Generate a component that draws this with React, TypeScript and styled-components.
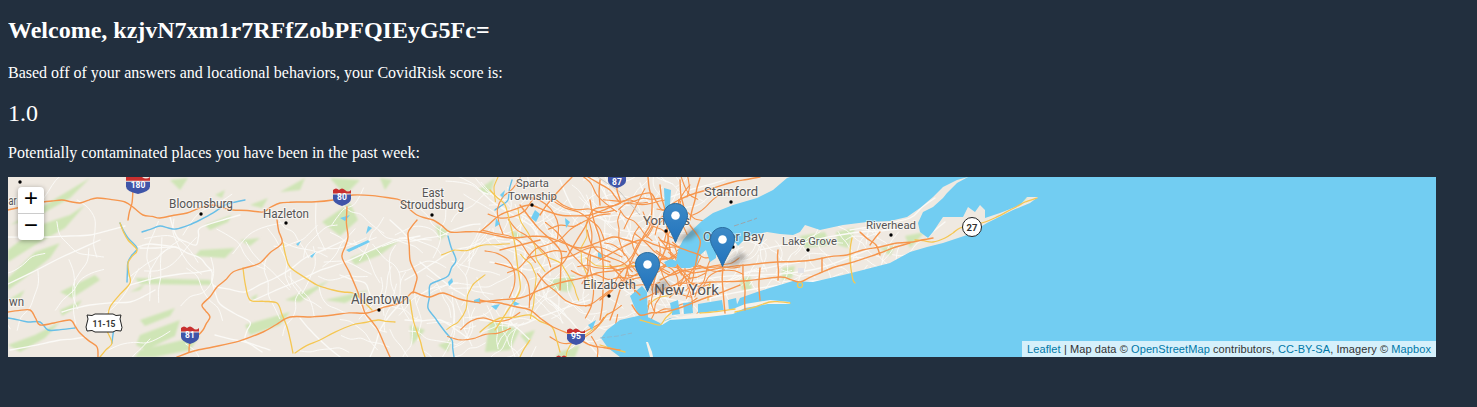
import React from "react";
import styled, { createGlobalStyle } from "styled-components";

const Global = createGlobalStyle`
  html, body { margin: 0; padding: 0; background: #222f3e; }
  body { margin: 8px; font-family: "Liberation Serif", "Times New Roman", serif; color: #fff; }
`;
const Page = styled.main`display: flow-root; margin-top: 4px;`;
const Title = styled.h2`font-size: 24px; font-weight: 700; margin: 5px 0 20px; line-height: 27px;`;
const Copy = styled.p`font-size: 16px; line-height: 18px; margin: 16px 0 15px;`;
const Score = styled.div`font-size: 24px; line-height: 27px; margin: 18px 0 17px;`;
const MapBox = styled.div`position: relative; width: 1428px; height: 180px; overflow: hidden; background: #efe9e1; font-family: "Liberation Sans", Arial, sans-serif;`;
const Tiles = styled.svg`display: block; width: 1428px; height: 180px;`;
const Zoom = styled.div`position: absolute; left: 10px; top: 10px; width: 26px; border-radius: 4px; background: #fff; box-shadow: 0 1px 5px rgba(0,0,0,.35); overflow: hidden;`;
const ZoomBtn = styled.a<{ $last?: boolean }>`display: block; width: 26px; height: 26px; text-align: center; color: #000; font: 400 24px/26px "Liberation Mono", monospace; border-bottom: ${p => (p.$last ? "none" : "1px solid #ccc")};`;
const Attribution = styled.div`position: absolute; right: 0; bottom: 0; padding: 0 5px; background: rgba(255,255,255,.7); color: #333; font-size: 11px; letter-spacing: .09px; line-height: 16px; white-space: nowrap;`;
const Link = styled.a`color: #0078a8; text-decoration: none;`;
const Marker = styled.svg<{ $x: number; $y: number }>`position: absolute; left: ${p => p.$x}px; top: ${p => p.$y}px; width: 25px; height: 40px; overflow: visible;`;

const C = { orange: "#f6964e", yellow: "#f5c753", white: "#fbfaf7", water: "#72cdf2", green: "#cfe5b6" };

const seaPath = `M790 177 L787 178 L773 190 L757 198 L733 205 L713 213 L703 220 L690 232 L683 240 L678 250 L676 262 L681 268 L690 268 L697 265 L699 256 L706 250 L710 262 L716 258 L716 244 L722 240 L732 238 L738 246 L746 238 L757 234 L767 232 L780 234 L793 235 L800 232 L805 225 L820 230 L843 225 L867 222 L890 221 L907 217 L920 208 L933 197 L943 187 L957 180 L968 177 L957 183 L947 193 L943 198 L933 207 L923 212 L918 223 L920 232 L928 238 L933 232 L943 217 L963 217 L968 207 L975 212 L980 205 L985 210 L985 218 L1000 213 L1020 205 L1027 197 L1038 197 L1030 203 L1013 210 L987 223 L967 235 L943 243 L927 247 L910 252 L890 263 L863 270 L843 275 L813 282 L793 281 L773 287 L757 292 L740 298 L733 313 L700 315 L670 318 L660 323 L650 318 L642 315 L620 320 L607 330 L601 338 L608 348 L620 357 L1436 357 L1436 177 Z`;
const barrier = `M660 323 L672 318 L700 313 L733 309 L745 304 L770 300 L790 302 L790 304 L768 304 L745 308 L733 314 L700 318 L670 320 L662 325 Z`;

const ponds: string[] = [
  "M630 296 L642 286 L647 292 L648 318 L640 318 L634 306 Z", "M664 188 L671 190 L670 205 L669 218 L665 214 Z", "M664 262 L671 259 L679 262 L675 267 L667 267 Z",
  "M670 303 L678 300 L680 314 L672 315 Z", "M683 303 L692 302 L693 313 L684 314 Z", "M698 304 L722 300 L724 312 L698 313 Z", "M728 300 L736 298 L738 310 L729 311 Z",
  "M535 210 L540 214 L536 222 L531 218 Z", "M565 218 L570 222 L566 228 Z", "M496 218 L500 224 L495 227 Z", "M598 252 L604 256 L598 260 Z", "M491 306 L500 304 L496 310 Z",
  "M368 226 L372 228 L366 234 Z", "M340 218 L350 215 L345 221 Z", "M368 240 L346 250 L349 252 L370 242 Z", "M448 282 L452 278 L453 282 L449 286 Z",
  "M474 300 L480 298 L480 303 L474 303 Z", "M296 244 L301 241 L298 246 Z", "M310 256 L316 252 L312 258 Z", "M500 195 L505 190 L503 198 Z", "M588 325 L596 320 L592 330 Z", "M512 300 L520 304 L514 306 Z"
];

const greens: string[] = [
  "M8 278 L35 252 L60 243 L50 258 L22 280 L8 290 Z", "M8 250 L40 225 L70 215 L85 205 L65 228 L35 245 L8 262 Z", "M10 225 L45 205 L90 178 L70 198 L35 218 Z",
  "M60 292 L95 275 L100 280 L72 298 Z", "M130 292 L145 284 L140 290 Z", "M8 345 L35 335 L60 322 L45 338 L20 352 Z", "M140 320 L175 308 L170 316 L145 326 Z",
  "M140 335 L180 320 L175 336 L146 350 L136 345 Z", "M140 350 L200 336 L190 350 L155 357 L135 357 Z", "M200 250 L235 248 L225 258 L195 256 Z", "M135 278 L210 280 L212 285 L140 284 Z",
  "M205 225 L232 215 L228 222 L210 230 Z", "M250 298 L258 294 L255 300 Z", "M245 325 L290 312 L280 325 L250 335 Z", "M285 300 L330 280 L300 302 Z", "M325 300 L370 290 L345 303 Z",
  "M240 240 L260 238 L250 246 Z", "M322 222 L350 203 L358 220 L340 236 Z", "M350 258 L400 240 L380 255 L355 265 Z", "M170 180 L188 178 L180 190 Z", "M280 192 L305 178 L300 190 Z",
  "M330 178 L360 180 L345 195 Z", "M380 178 L392 180 L385 190 Z", "M435 225 L450 232 L440 240 Z", "M410 325 L425 330 L412 345 Z", "M438 345 L452 340 L448 352 Z", "M490 320 L520 330 L510 350 L485 352 Z",
  "M550 280 L575 275 L570 292 L552 290 Z", "M510 230 L525 235 L515 240 Z", "M520 335 L535 330 L528 345 Z", "M560 352 L580 345 L575 357 L555 357 Z", "M478 190 L495 178 L490 195 Z", "M800 236 L825 232 L830 245 L805 248 Z",
  "M836 232 L855 228 L848 248 L838 245 Z", "M905 236 L925 232 L910 248 Z", "M880 248 L895 246 L890 256 Z", "M740 280 L750 276 L752 290 L742 290 Z", "M782 268 L795 266 L792 278 L782 280 Z", "M988 208 L992 205 L996 208 L990 214 Z", "M1020 198 L1028 197 L1022 203 Z", "M60 310 L82 300 L78 306 L62 316 Z", "M8 300 L25 290 L20 298 Z", "M250 205 L268 198 L262 208 Z", "M215 195 L225 190 L222 198 Z"
];

const whites: string[] = [
  "8,237 50,237 90,235 125,226", "140,248 175,247 200,258 212,272 213,285 245,292 275,278 305,258 345,240", "8,284 60,258 100,240", "170,217 178,238 196,245 200,228 240,215", "135,248 150,244 176,247",
  "130,285 180,274 212,270", "62,312 90,305 130,302 155,290", "213,285 220,304 250,322 245,340 262,352", "250,302 300,280 345,262 395,240 420,236", "340,275 365,283 372,300", "405,280 435,262 455,250 480,243",
  "390,220 412,240 440,236 470,225 480,224", "420,262 452,288 465,296", "400,304 380,330 370,357", "300,318 320,340 340,357", "215,335 245,342 270,350", "10,350 60,340 85,337", "405,320 440,320 470,340",
  "480,190 505,210 530,225 548,250 550,275", "490,262 530,270 560,262 590,250", "500,230 525,250 520,285 510,320 530,340", "480,320 520,325 560,310 590,300", "550,300 570,320 590,345 600,357", "560,180 575,210 610,222 640,212", "600,185 625,222 640,255 650,280",
  "590,270 610,280 640,300 660,312", "660,275 700,292 750,272 800,262", "690,282 760,275 820,268 880,245", "760,250 800,243 860,232 905,228", "925,240 945,222", "700,300 760,288 830,280", "640,183 650,203 690,190 725,180", "850,230 910,218 935,198"
];

const blues: string[] = [
  "120,223 128,238 137,248 128,262 127,282", "142,232 160,226 176,229 200,220 225,205 245,200", "75,328 48,330 40,322 28,322 8,318", "112,343 114,330 120,320", "448,236 456,260 448,276 430,285 428,308 440,325 452,340 454,357", "512,180 508,200 495,210"
];

const orange: string[] = [
  "8,210 43,202 62,200 80,203 97,198 125,202 143,215 160,218 187,213 213,205 233,210 263,212 280,203 300,202 333,200 353,195 390,198 400,200 417,215 433,220 450,232 480,232 513,238 547,237 580,248 613,237 637,243",
  "133,190 132,203 128,220", "347,207 348,237 342,257 357,290 365,313 378,330 390,357", "480,303 443,293 430,297 413,292 400,303 367,313 333,315 290,317 263,332 213,347 177,357",
  "277,220 282,243 260,263 233,272 217,287 202,305 210,317 203,330 190,343 189,352", "8,312 30,310 40,325 70,320 80,333 97,347 98,357", "417,220 408,233 410,260 417,277 413,293",
  "480,302 520,298 547,287 573,280 597,273 630,267 660,262", "530,300 543,277 563,263 577,240 593,210 620,203 617,190 618,177", "480,300 500,303 530,310 553,327 590,345 620,350", "480,232 500,215 530,205 560,215 590,215 620,203",
  "620,203 650,193 663,210 690,195 733,182 760,177", "588,177 610,190 620,203", "648,177 652,200 650,225 640,243 628,268 620,290 610,320", "660,185 665,210 668,240 660,262 652,290", "680,180 684,210 676,240", "700,178 695,200 690,220",
  "693,273 720,268 747,265 777,262 813,260 847,255 880,247 913,242 933,238", "680,283 713,282 780,277 800,282 820,273 850,263 880,253 910,243", "723,268 723,290 725,313", "743,265 745,290 745,310", "778,250 778,265 778,280", "822,258 822,272", "860,232 876,245 880,255", "870,245 880,232",
  "660,280 680,270 693,273", "640,300 660,290 680,283", "632,305 640,315 665,312 700,300 740,285", "600,260 640,240 670,250", "590,200 600,240 603,290 600,320", "520,205 560,250 560,290", "500,250 540,240", "560,240 610,262", "572,177 555,195 540,215", "600,300 645,270", "610,265 640,295", "640,255 670,275 700,268", "660,240 700,255", "600,180 600,205", "680,205 700,240 695,268", "760,268 760,300"
];

const yellow: string[] = [
  "120,223 128,240 137,250 128,263 130,283 110,307 107,330 112,343 100,357", "283,243 290,267 317,285 333,290 353,293 367,305 372,310", "243,268 250,300 277,303 287,327 293,353", "410,300 420,340 425,357", "295,353 320,340 352,325 378,320 395,322",
  "480,332 500,318 530,315 552,327 560,352", "490,190 505,205 515,245 520,290 495,330", "530,340 520,357", "640,320 660,325 672,312", "700,313 735,309", "735,312 770,302 790,303", "710,282 708,300", "852,238 850,258 853,280 855,283", "915,240 933,242 945,238 960,228 985,222 1010,210 1025,202 1037,198", "600,345 625,352"
];

function rnd(seed: number) { let s = seed; return () => { s = (s * 16807) % 2147483647; return s / 2147483647; }; }
function mesh(seed: number, n: number, x0: number, x1: number, y0: number, y1: number, step: number, parts = 5): string[] {
  const r = rnd(seed); const out: string[] = [];
  for (let i = 0; i < n; i++) {
    let x = x0 + r() * (x1 - x0), y = y0 + r() * (y1 - y0), a = r() * Math.PI * 2; const pts = [`${x.toFixed(1)},${y.toFixed(1)}`];
    for (let k = 0; k < parts; k++) { a += (r() - .5) * 1.1; x += Math.cos(a) * step; y += Math.sin(a) * step; pts.push(`${x.toFixed(1)},${y.toFixed(1)}`); }
    out.push(pts.join(" "));
  }
  return out;
}
// Catmull-Rom through the points, with a small wobble so that roads do not run ruler-straight.
function curve(line: string, seed: number): string {
  const r = rnd(seed + 11);
  const raw = line.split(" ").map(p => p.split(",").map(Number));
  const pts: number[][] = [];
  raw.forEach((p, i) => {
    pts.push(p);
    const q = raw[i + 1];
    if (q) {
      const d = Math.hypot(q[0] - p[0], q[1] - p[1]);
      if (d > 14) pts.push([(p[0] + q[0]) / 2 + (r() - .5) * d * .07, (p[1] + q[1]) / 2 + (r() - .5) * d * .07]);
    }
  });
  let d = `M${pts[0][0]} ${pts[0][1]}`;
  for (let i = 0; i < pts.length - 1; i++) {
    const a = pts[Math.max(i - 1, 0)], b = pts[i], c = pts[i + 1], e = pts[Math.min(i + 2, pts.length - 1)];
    d += `C${(b[0] + (c[0] - a[0]) / 6).toFixed(1)} ${(b[1] + (c[1] - a[1]) / 6).toFixed(1)} ${(c[0] - (e[0] - b[0]) / 6).toFixed(1)} ${(c[1] - (e[1] - b[1]) / 6).toFixed(1)} ${c[0].toFixed(1)} ${c[1].toFixed(1)}`;
  }
  return d;
}
const cityOrange = mesh(77, 60, 620, 700, 195, 312, 9);
const regionOrange = mesh(41, 26, 485, 625, 190, 345, 13);
const regionYellow = mesh(19, 10, 485, 620, 200, 350, 14);
const cityWhite = mesh(31, 130, 485, 700, 180, 350, 9);
const westWhite = mesh(53, 60, 300, 485, 215, 355, 10);
const farWhite = mesh(67, 28, 10, 300, 215, 355, 13);
const liWhite = mesh(97, 60, 700, 900, 238, 292, 7);

const labels = [
  ["Bloomsburg", 169, 208, 64, 12], ["Hazleton", 263, 218, 46, 12], ["East", 422, 197, 22, 12], ["Stroudsburg", 400, 209, 64, 12], ["Allentown", 351, 304, 58, 14], ["wn", 9, 306, 15, 12], ["ar", 8.5, 205, 8, 12],
  ["Sparta", 516, 187, 33, 11.5], ["Township", 508, 200, 49, 11.5], ["Stamford", 704, 196, 54, 13], ["Yonkers", 643, 225, 47, 12.5], ["Oyster Bay", 703, 241, 61, 13], ["Lake Grove", 782, 245, 55, 11.5], ["Riverhead", 866, 229, 50, 11.5], ["Elizabeth", 583, 289, 53, 13], ["New York", 654, 295, 65, 15.5]
] as const;
const dots = [[20, 182], [201, 214], [286, 223], [432, 215], [379, 310], [532, 205], [731, 202], [666, 231], [733, 247], [808, 250], [891, 235], [609, 296]];

function Shield({ x, y, w, h, n, dy = 0 }: { x: number; y: number; w: number; h: number; n: string; dy?: number }) {
  const top = y + h * 0.3;
  return (
    <g>
      <path d={`M${x} ${y + 2} q${w / 6} -3 ${w / 3} 0 q${w / 6} -3 ${w / 3} 0 q${w / 6} 3 ${w / 3} 0 V${top} H${x} Z`} fill="#c9302f" />
      <path d={`M${x} ${top + 1} H${x + w} V${y + h * .6} Q${x + w} ${y + h * .85} ${x + w / 2} ${y + h} Q${x} ${y + h * .85} ${x} ${y + h * .6} Z`} fill="#3f55a8" />
      <text x={x + w / 2} y={y + h * .67 + dy} textAnchor="middle" fill="#fff" fontFamily="Roboto, sans-serif" fontWeight="700" fontSize="8.5">{n}</text>
    </g>
  );
}

function Pin({ x, y, id }: { x: number; y: number; id: string }) {
  return (
    <Marker $x={x} $y={y} viewBox="0 0 25 40">
      <defs>
        <linearGradient id={id} x1="0" y1="0" x2="0" y2="1"><stop offset="0" stopColor="#3d8ac6" /><stop offset="1" stopColor="#2273bd" /></linearGradient>
      </defs>
      <path d="M12.5 .5C5.8 .5 .5 5.8 .5 12.5c0 3.4 1.4 6 3 9 3 5.5 6.5 11.5 9 18 2.5-6.5 6-12.5 9-18 1.6-3 3-5.6 3-9C24.5 5.8 19.2 .5 12.5 .5Z" fill={`url(#${id})`} stroke="#2b6d9f" strokeWidth="1" />
      <circle cx="12.5" cy="12.5" r="4.3" fill="#fff" />
    </Marker>
  );
}

function Lines({ items, stroke, w }: { items: readonly string[]; stroke: string; w: number }) {
  return <g fill="none" stroke={stroke} strokeWidth={w} strokeLinejoin="round" strokeLinecap="round">{items.map((p, i) => <path key={i} d={curve(p, i + 1)} />)}</g>;
}

export default function App() {
  return (
    <Page>
      <Global />
      <Title>Welcome, kzjvN7xm1r7RFfZobPFQIEyG5Fc=</Title>
      <Copy>Based off of your answers and locational behaviors, your CovidRisk score is:</Copy>
      <Score>1.0</Score>
      <Copy>Potentially contaminated places you have been in the past week:</Copy>
      <MapBox>
        <Tiles viewBox="8 177 1428 180">
          <defs>
            <filter id="soft" x="-5%" y="-5%" width="110%" height="110%"><feGaussianBlur stdDeviation=".3" /></filter>
            <filter id="patch"><feGaussianBlur stdDeviation="1.1" /></filter>
            <filter id="shade"><feGaussianBlur stdDeviation="2" /></filter>
          </defs>
          <g filter="url(#patch)" fill={C.green}>{greens.map((d, i) => <path key={i} d={d} />)}</g>
          <g filter="url(#soft)">
            <Lines items={whites} stroke={C.white} w={1.3} />
            <Lines items={farWhite} stroke={C.white} w={1} />
            <Lines items={westWhite} stroke={C.white} w={1} />
            <Lines items={cityWhite} stroke={C.white} w={1} />
            <Lines items={liWhite} stroke={C.white} w={1} />
            <Lines items={blues} stroke="#67bfe8" w={1.4} />
            <Lines items={regionYellow} stroke={C.yellow} w={1.1} />
            <Lines items={regionOrange} stroke={C.orange} w={1.2} />
            <Lines items={cityOrange} stroke={C.orange} w={1.1} />
            <g fill={C.water}>{ponds.map((d, i) => <path key={i} d={d} />)}</g>
            <path d={seaPath} fill={C.water} />
            <path d={barrier} fill="#f7f2ea" />
            <path d="M646 342 L648 342 L652 352 L653 357 L650 357 Z" fill="#f7f2ea" />
            <path d="M734 226 L755 219 L757 218" stroke="#9aa6ad" strokeWidth="1" strokeDasharray="5 2" fill="none" />
            <path d="M600 338 L618 336 L632 333" stroke="#8fb4c8" strokeWidth=".8" strokeDasharray="5 2" fill="none" />
            <path d="M598 177 L620 192 L640 215" stroke="#c3c1bd" strokeWidth=".8" fill="none" />
            <Lines items={yellow} stroke={C.yellow} w={1.3} />
            <Lines items={orange} stroke={C.orange} w={1.4} />
            <rect x="798" y="268" width="6" height="5" fill="#e3e3e8" />
            <circle cx="800" cy="285" r="2.5" fill="none" stroke={C.yellow} strokeWidth="1.2" />
          </g>
          <g fill="#000">{dots.map(([x, y]) => <circle key={`${x}-${y}`} cx={x} cy={y} r="1.7" />)}</g>
          <g fontFamily="Roboto, 'Noto Sans', sans-serif" fill="#555" stroke="rgba(255,255,255,.55)" strokeWidth="2" style={{ paintOrder: "stroke" }}>
            {labels.map(([t, x, y, w, s]) => <text key={t} x={x} y={y} fontSize={s} textLength={w} lengthAdjust="spacingAndGlyphs">{t}</text>)}
          </g>
          <Shield x={126} y={175} w={24} h={19} n="180" />
          <Shield x={333} y={188} w={18} h={18} n="80" />
          <Shield x={181} y={326} w={18} h={18} n="81" />
          <Shield x={608} y={170} w={18} h={18} n="87" dy={2.5} />
          <Shield x={567} y={328} w={18} h={17} n="95" />
          <Shield x={556} y={355} w={16} h={16} n="" />
          <path d="M87 315 q6 1.5 8 -1 h18 q2 2.5 8 1 q-2 4 0 8 q2 5 0 8 q-6 -1.5 -8 1 h-18 q-2 -2.5 -8 -1 q-2 -4 0 -8 q2 -4 0 -8Z" fill="#fff" stroke="#222" strokeWidth="1" />
          <text x="104" y="327" textAnchor="middle" fontFamily="Roboto, sans-serif" fontWeight="700" fontSize="8.5" fill="#333">11-15</text>
          <circle cx="972" cy="227" r="9.5" fill="#fff" stroke="#222" strokeWidth="1" />
          <text x="972" y="230.5" textAnchor="middle" fontFamily="Roboto, sans-serif" fontWeight="700" fontSize="9.5" fill="#333">27</text>
          <g filter="url(#shade)" fill="#555" opacity=".4">
            <path d="M675 241 L692 228 L700 232 L690 240 Z" /><path d="M722 266 L740 252 L748 257 L737 265 Z" /><path d="M647 292 L664 280 L671 284 L660 292 Z" />
          </g>
        </Tiles>
        <Pin x={655} y={26} id="p1" />
        <Pin x={702} y={50} id="p2" />
        <Pin x={627} y={75} id="p3" />
        <Zoom>
          <ZoomBtn>+</ZoomBtn>
          <ZoomBtn $last>−</ZoomBtn>
        </Zoom>
        <Attribution><Link>Leaflet</Link> | Map data © <Link>OpenStreetMap</Link> contributors, <Link>CC-BY-SA</Link>, Imagery © <Link>Mapbox</Link></Attribution>
      </MapBox>
    </Page>
  );
}
